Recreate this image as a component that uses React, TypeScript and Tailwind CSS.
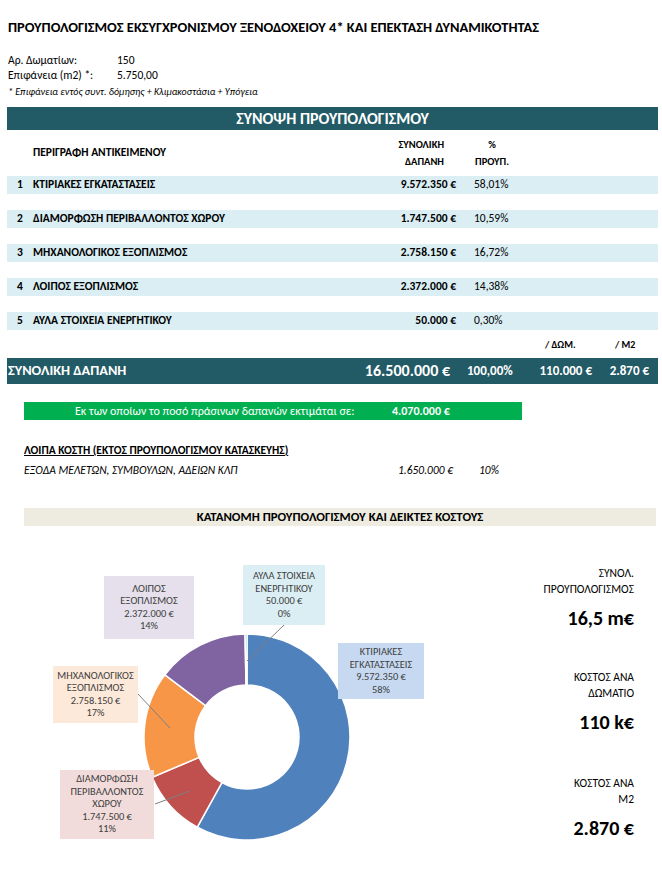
import React from "react";

const rows = [
  { n: 1, label: "ΚΤΙΡΙΑΚΕΣ ΕΓΚΑΤΑΣΤΑΣΕΙΣ", amount: "9.572.350 €", pct: "58,01%" },
  { n: 2, label: "ΔΙΑΜΟΡΦΩΣΗ ΠΕΡΙΒΑΛΛΟΝΤΟΣ ΧΩΡΟΥ", amount: "1.747.500 €", pct: "10,59%" },
  { n: 3, label: "ΜΗΧΑΝΟΛΟΓΙΚΟΣ ΕΞΟΠΛΙΣΜΟΣ", amount: "2.758.150 €", pct: "16,72%" },
  { n: 4, label: "ΛΟΙΠΟΣ ΕΞΟΠΛΙΣΜΟΣ", amount: "2.372.000 €", pct: "14,38%" },
  { n: 5, label: "ΑΥΛΑ ΣΤΟΙΧΕΙΑ ΕΝΕΡΓΗΤΙΚΟΥ", amount: "50.000 €", pct: "0,30%" },
];

const slices = [
  { v: 9572350, c: "#4f81bd" },
  { v: 1747500, c: "#c0504d" },
  { v: 2758150, c: "#f79646" },
  { v: 2372000, c: "#8064a2" },
  { v: 50000, c: "#4bacc6" },
];

const CX = 247;
const CY = 211;
const R = 103;
const RI = 52;

function pt(r: number, f: number) {
  const t = f * Math.PI * 2 - Math.PI / 2;
  return `${(CX + r * Math.cos(t)).toFixed(2)} ${(CY + r * Math.sin(t)).toFixed(2)}`;
}

function arc(f0: number, f1: number) {
  const large = f1 - f0 > 0.5 ? 1 : 0;
  return `M ${pt(R, f0)} A ${R} ${R} 0 ${large} 1 ${pt(R, f1)} L ${pt(RI, f1)} A ${RI} ${RI} 0 ${large} 0 ${pt(RI, f0)} Z`;
}

function Donut() {
  const total = slices.reduce((s, x) => s + x.v, 0);
  let acc = 0;
  return (
    <svg className="absolute inset-0" width={500} height={348} viewBox="0 0 500 348">
      {slices.map((s, i) => {
        const f0 = acc / total;
        acc += s.v;
        const f1 = acc / total;
        return <path key={i} d={arc(f0, f1)} fill={s.c} stroke="#ffffff" strokeWidth={1.5} />;
      })}
      <g stroke="#7f7f7f" strokeWidth={1} fill="none">
        <line x1={284} y1={99} x2={247} y2={135} />
        <line x1={138} y1={168} x2={170} y2={202} />
        <line x1={155} y1={278} x2={190} y2={265} />
      </g>
    </svg>
  );
}

function ChartLabel({ className, lines }: { className: string; lines: string[] }) {
  return (
    <div className={`absolute flex flex-col items-center justify-center text-center text-[10.4px] leading-[12.5px] text-[#404040] ${className}`}>
      {lines.map((l) => (
        <span key={l}>{l}</span>
      ))}
    </div>
  );
}

function Kpi({ top, big, className }: { top: string[]; big: string; className: string }) {
  return (
    <div className={className}>
      {top.map((t) => (
        <div key={t} className="text-[11.5px] leading-4">
          {t}
        </div>
      ))}
      <div className="mt-[9px] text-[20px] font-bold leading-6">{big}</div>
    </div>
  );
}

export default function App() {
  return (
    <div className="h-[875px] w-[662px] overflow-hidden bg-white font-['Carlito','Liberation_Sans',sans-serif] text-black">
      {/* Title */}
      <h1 className="pl-2 pt-[18px] text-[14.4px] font-bold leading-[18px]">
        ΠΡΟΥΠΟΛΟΓΙΣΜΟΣ ΕΚΣΥΓΧΡΟΝΙΣΜΟΥ ΞΕΝΟΔΟΧΕΙΟΥ 4* ΚΑΙ ΕΠΕΚΤΑΣΗ ΔΥΝΑΜΙΚΟΤΗΤΑΣ
      </h1>

      {/* Info */}
      <div className="mt-[17px] pl-2 text-[11.5px] leading-[15px]">
        <div className="flex">
          <span className="w-[109px]">Αρ. Δωματίων:</span>
          <span>150</span>
        </div>
        <div className="flex">
          <span className="w-[109px]">Επιφάνεια (m2) *:</span>
          <span>5.750,00</span>
        </div>
        <div className="mt-[1px] text-[10px] italic">* Επιφάνεια εντός συντ. δόμησης + Κλιμακοστάσια + Υπόγεια</div>
      </div>

      {/* Summary header */}
      <div className="ml-[7px] mt-[8px] flex h-[23px] w-[651px] items-center justify-center bg-[#225a66] text-[16px] font-bold text-white">
        ΣΥΝΟΨΗ ΠΡΟΥΠΟΛΟΓΙΣΜΟΥ
      </div>

      <div className="ml-[7px] w-[651px]">
        <div className="flex h-[46px] items-center font-bold">
          <span className="w-[330px] pl-[26px] text-[11.5px]">ΠΕΡΙΓΡΑΦΗ ΑΝΤΙΚΕΙΜΕΝΟΥ</span>
          <span className="w-[107px] text-right text-[10.5px] leading-[17px]">
            ΣΥΝΟΛΙΚΗ
            <br />
            ΔΑΠΑΝΗ
          </span>
          <span className="w-[96px] text-center text-[10.5px] leading-[17px]">
            %
            <br />
            ΠΡΟΥΠ.
          </span>
        </div>

        <div className="flex flex-col gap-[16px]">
          {rows.map((r) => (
            <div key={r.n} className="flex h-[18px] items-center bg-[#daeef3] text-[11.5px]">
              <span className="w-[26px] pl-[10px] font-bold">{r.n}</span>
              <span className="w-[330px] font-bold">{r.label}</span>
              <span className="w-[93px] text-right font-bold">{r.amount}</span>
              <span className="pl-[18px]">{r.pct}</span>
            </div>
          ))}
        </div>

        <div className="flex h-[28px] items-end pb-[6px] text-[10px] font-bold">
          <span className="w-[538px]" />
          <span className="w-[70px]">/ ΔΩΜ.</span>
          <span>/ Μ2</span>
        </div>

        {/* Total */}
        <div className="flex h-[26px] items-center bg-[#225a66] font-bold text-white">
          <span className="w-[300px] pl-[1px] text-[14.3px]">ΣΥΝΟΛΙΚΗ ΔΑΠΑΝΗ</span>
          <span className="w-[143px] text-right text-[16px]">16.500.000 €</span>
          <span className="w-[50px] pl-[17px] text-[13px]">100,00%</span>
          <span className="w-[92px] text-right text-[13px]">110.000 €</span>
          <span className="w-[57px] text-right text-[13px]">2.870 €</span>
        </div>
      </div>

      {/* Green expenses */}
      <div className="ml-[24px] mt-[18px] flex h-[18px] w-[498px] items-center bg-[#00b050] text-[12px] text-white">
        <span className="w-[368px] pl-[51px]">Εκ των οποίων το ποσό πράσινων δαπανών εκτιμάται σε:</span>
        <span className="font-bold">4.070.000 €</span>
      </div>

      {/* Other costs */}
      <div className="ml-[24px] mt-[23px] text-[11.5px] leading-[14px]">
        <div className="font-bold underline">ΛΟΙΠΑ ΚΟΣΤΗ (ΕΚΤΟΣ ΠΡΟΥΠΟΛΟΓΙΣΜΟΥ ΚΑΤΑΣΚΕΥΗΣ)</div>
        <div className="mt-[6px] flex italic">
          <span className="w-[360px]">ΕΞΟΔΑ ΜΕΛΕΤΩΝ, ΣΥΜΒΟΥΛΩΝ, ΑΔΕΙΩΝ ΚΛΠ</span>
          <span className="w-[69px] text-right">1.650.000 €</span>
          <span className="pl-[26px]">10%</span>
        </div>
      </div>

      {/* Allocation header */}
      <div className="ml-[24px] mt-[31px] flex h-[18px] w-[632px] items-center justify-center bg-[#eeece1] text-[12.8px] font-bold">
        ΚΑΤΑΝΟΜΗ ΠΡΟΥΠΟΛΟΓΙΣΜΟΥ ΚΑΙ ΔΕΙΚΤΕΣ ΚΟΣΤΟΥΣ
      </div>

      <div className="flex h-[348px]">
        <div className="relative w-[500px]">
          <Donut />
          <ChartLabel className="left-[243px] top-[39px] h-[60px] w-[82px] bg-[#dbeef3]" lines={["ΑΥΛΑ ΣΤΟΙΧΕΙΑ", "ΕΝΕΡΓΗΤΙΚΟΥ", "50.000 €", "0%"]} />
          <ChartLabel className="left-[104px] top-[50px] h-[63px] w-[90px] bg-[#e5e0ec]" lines={["ΛΟΙΠΟΣ", "ΕΞΟΠΛΙΣΜΟΣ", "2.372.000 €", "14%"]} />
          <ChartLabel className="left-[338px] top-[117px] h-[56px] w-[86px] bg-[#c6d9f1]" lines={["ΚΤΙΡΙΑΚΕΣ", "ΕΓΚΑΤΑΣΤΑΣΕΙΣ", "9.572.350 €", "58%"]} />
          <ChartLabel className="left-[53px] top-[140px] h-[57px] w-[85px] bg-[#fde9d9]" lines={["ΜΗΧΑΝΟΛΟΓΙΚΟΣ", "ΕΞΟΠΛΙΣΜΟΣ", "2.758.150 €", "17%"]} />
          <ChartLabel className="left-[60px] top-[244px] h-[69px] w-[94px] bg-[#f2dcdb]" lines={["ΔΙΑΜΟΡΦΩΣΗ", "ΠΕΡΙΒΑΛΛΟΝΤΟΣ", "ΧΩΡΟΥ", "1.747.500 €", "11%"]} />
        </div>

        <div className="w-[134px] pt-[39px] text-right">
          <Kpi top={["ΣΥΝΟΛ.", "ΠΡΟΥΠΟΛΟΓΙΣΜΟΣ"]} big="16,5 m€" className="" />
          <Kpi top={["ΚΟΣΤΟΣ ΑΝΑ", "ΔΩΜΑΤΙΟ"]} big="110 k€" className="mt-[39px]" />
          <Kpi top={["ΚΟΣΤΟΣ ΑΝΑ", "Μ2"]} big="2.870 €" className="mt-[41px]" />
        </div>
      </div>
    </div>
  );
}
